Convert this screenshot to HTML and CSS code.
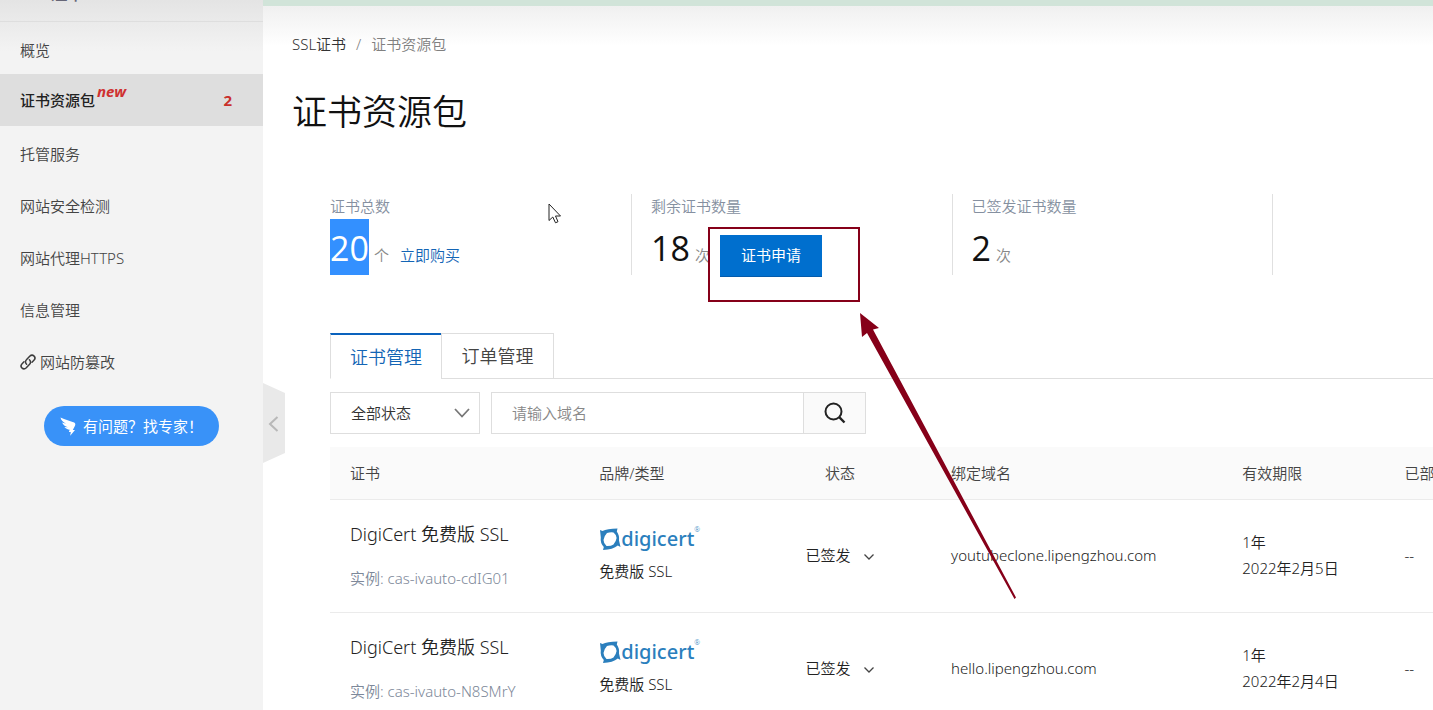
FILE: index.html
```html
<!DOCTYPE html>
<html lang="zh-CN">
<head>
<meta charset="utf-8">
<title>证书资源包</title>
<link rel="stylesheet" href="styles.css">
</head>
<body>
<div class="app">
  <aside class="sidebar">
    <div class="sidebar-head"><span class="sidebar-title">SSL证书</span></div>
    <nav class="nav">
      <a class="nav-item" href="#">概览</a>
      <a class="nav-item active" href="#"><span>证书资源包</span><em class="tag-new">new</em><b class="count">2</b></a>
      <a class="nav-item" href="#">托管服务</a>
      <a class="nav-item" href="#">网站安全检测</a>
      <a class="nav-item" href="#">网站代理HTTPS</a>
      <a class="nav-item" href="#">信息管理</a>
      <a class="nav-item" href="#"><svg class="link-icon" viewBox="0 0 16 16"><g fill="none" stroke="#3c3c3c" stroke-width="1.5" stroke-linecap="round"><path d="M6.600 10.200C5.200 8.900 5.200 7 6.400 5.800L9.700 2.300C10.900 1.100 12.800.900 14.100 2.100C15.300 3.300 15.100 5.100 13.900 6.300L12 8.200"/><path d="M9.400 5.800C10.800 7.100 10.800 9 9.600 10.200L6.300 13.700C5.100 14.900 3.200 15.100 1.900 13.900C.700 12.700.900 10.900 2.100 9.700L4 7.800"/></g></svg>网站防篡改</a>
    </nav>
    <button class="help" type="button"><svg class="wing" viewBox="0 0 16 19"><path fill="#fff" d="M.5.500C5 2.800 10.500 4 14.200 5.500C15.600 6.200 15.500 7.500 15 8.800L12.800 13H15L10.200 18.800L10.800 15H8.900L9.700 12.700C7.500 12.600 5.600 11.700 4.400 10.100L8 10.200C5.200 9.400 2.900 8 2.100 5.600L6.200 6.800C3.100 5.300 1 3.200.5.500Z"/></svg>有问题？找专家！</button>
    <button class="collapse" type="button" aria-label="收起"><svg viewBox="0 0 22 80"><path fill="#e9e9e9" d="M0 0L22 10V70L0 80Z"/><path fill="none" stroke="#b8b8b8" stroke-width="2" d="M14.500 34L7 41L14.500 48"/></svg></button>
  </aside>
  <main class="main">
    <div class="crumbs"><a href="#">SSL证书</a><span class="sep">/</span><span>证书资源包</span></div>
    <h1 class="title">证书资源包</h1>
    <section class="stats">
      <div class="stat"><div class="label">证书总数</div><div class="value"><span class="num selected">20</span><span class="unit">个</span><a class="buy" href="#">立即购买</a></div></div>
      <div class="stat"><div class="label">剩余证书数量</div><div class="value"><span class="num">18</span><span class="unit">次</span><button class="apply" type="button">证书申请</button></div></div>
      <div class="stat"><div class="label">已签发证书数量</div><div class="value"><span class="num">2</span><span class="unit">次</span></div></div>
    </section>
    <section class="panel">
      <div class="tabs"><button class="tab current" type="button">证书管理</button><button class="tab" type="button">订单管理</button></div>
      <form class="filters">
        <div class="select-wrap"><select aria-label="状态"><option>全部状态</option></select><svg viewBox="0 0 16 10"><path fill="none" stroke="#777" stroke-width="1.800" d="M1 1L8 8.500L15 1"/></svg></div>
        <div class="search"><input type="text" aria-label="域名" placeholder="请输入域名"><button type="button" aria-label="搜索"><svg viewBox="0 0 22 22"><g fill="none" stroke="#222" stroke-width="2"><circle cx="9.500" cy="9.500" r="8"/><path stroke-width="2.400" d="M15.200 15.200L20.500 20.500"/></g></svg></button></div>
      </form>
      <table class="certs">
        <colgroup><col class="c-cert"><col class="c-brand"><col class="c-status"><col class="c-domain"><col class="c-valid"><col></colgroup>
        <thead><tr><th>证书</th><th>品牌/类型</th><th class="center">状态</th><th>绑定域名</th><th>有效期限</th><th>已部</th></tr></thead>
        <tbody>
          <tr>
            <td class="cert"><div class="name">DigiCert 免费版 SSL</div><div class="instance">实例: cas-ivauto-cdIG01</div></td>
            <td class="brand"><div class="logo"><svg viewBox="0 0 22 24"><path fill="#2b7fbd" fill-rule="evenodd" d="M1 3L3.500 4Q8 1.500 18.500 1.500L17.800 4.500Q20.500 8 20 13.500L21.500 20L18.800 18.500Q14 22.500 4 23L4.800 20Q1 16 1.800 10.500ZM8 6Q5 9 4.500 13Q4.600 16.500 7.500 19Q12 19.200 14.500 17.400Q17.300 14 17.600 11Q17.400 7.500 14.500 5.400Q11 5 8 6Z"/></svg><span>digicert</span><sup>®</sup></div><div>免费版 SSL</div></td>
            <td class="center">已签发<svg class="chev" viewBox="0 0 12 8"><path fill="none" stroke="#444" stroke-width="1.300" d="M1.500 1.500L6 6L10.500 1.500"/></svg></td>
            <td>youtubeclone.lipengzhou.com</td>
            <td>1年<br>2022年2月5日</td>
            <td>--</td>
          </tr>
          <tr>
            <td class="cert"><div class="name">DigiCert 免费版 SSL</div><div class="instance">实例: cas-ivauto-N8SMrY</div></td>
            <td class="brand"><div class="logo"><svg viewBox="0 0 22 24"><path fill="#2b7fbd" fill-rule="evenodd" d="M1 3L3.500 4Q8 1.500 18.500 1.500L17.800 4.500Q20.500 8 20 13.500L21.500 20L18.800 18.500Q14 22.500 4 23L4.800 20Q1 16 1.800 10.500ZM8 6Q5 9 4.500 13Q4.600 16.500 7.500 19Q12 19.200 14.500 17.400Q17.300 14 17.600 11Q17.400 7.500 14.500 5.400Q11 5 8 6Z"/></svg><span>digicert</span><sup>®</sup></div><div>免费版 SSL</div></td>
            <td class="center">已签发<svg class="chev" viewBox="0 0 12 8"><path fill="none" stroke="#444" stroke-width="1.300" d="M1.500 1.500L6 6L10.500 1.500"/></svg></td>
            <td>hello.lipengzhou.com</td>
            <td>1年<br>2022年2月4日</td>
            <td>--</td>
          </tr>
        </tbody>
      </table>
    </section>
  </main>
  <div class="callout"></div>
  <svg class="arrow" viewBox="0 0 156 286"><path fill="#860019" d="M0 0L19 15L13 16.500L156 284.500L154.500 286L7 20L2 24Z"/></svg>
  <svg class="cursor" viewBox="0 0 14 21"><path fill="#fff" stroke="#222" d="M1 1V17.500L4.800 14L7.500 19.800L10 18.700L7.500 13H12.500Z"/></svg>
</div>
</body>
</html>
```
FILE: styles.css
```css
* { box-sizing: border-box; }
body {
  margin: 0;
  font: 15px/26px "Noto Sans", "Noto Sans CJK SC", sans-serif;
  font-weight: 350;
  color: #333;
  background: #fff;
}
a { color: inherit; text-decoration: none; }
button, input, select { font: inherit; color: inherit; margin: 0; }
svg { display: block; flex: none; }

.app {
  position: relative;
  display: flex;
  height: 100vh;
  overflow: hidden;
}

.sidebar {
  position: relative;
  flex: none;
  width: 263px;
  background: linear-gradient(#e4e4e4, #f3f3f3 52px);
}
.sidebar-head {
  display: flex;
  align-items: flex-end;
  height: 22px;
  padding: 0 20px 15px;
  border-bottom: 1px solid #dedede;
  overflow: hidden;
}
.sidebar-title { font-size: 18px; font-weight: 500; color: #667; }
.nav-item {
  display: flex;
  align-items: center;
  height: 52px;
  padding: 0 31px 0 20px;
  color: #444;
}
.nav { padding-top: 2px; }
.nav .active { margin: -2px 0 2px; background: #dedede; color: #222; font-weight: 500; }
.tag-new { align-self: flex-start; padding: 4px 0 0 2px; color: #cf3030; font-weight: 700; }
.count { margin-left: auto; color: #c9302c; }
.link-icon { width: 16px; height: 16px; margin-right: 4px; }
.help {
  display: flex;
  align-items: center;
  justify-content: center;
  width: 175px;
  height: 40px;
  margin: 18px 44px 0;
  padding: 0;
  border: 0;
  border-radius: 20px;
  background: #3992f8;
  color: #fff;
  font-weight: 400;
}
.wing { width: 16px; height: 19px; margin-right: 7px; }
.collapse {
  position: absolute;
  top: 383px;
  left: 100%;
  width: 22px;
  height: 80px;
  padding: 0;
  border: 0;
  background: none;
}

.main {
  flex: 1;
  min-width: 0;
  padding: 25px 0 0 29px;
  border-top: 6px solid #d1e4d9;
  background: linear-gradient(#f0f0f0, #fff 40px);
}
.crumbs { color: #808080; }
.crumbs a { color: #333; }
.sep { margin: 0 10px; }
.title {
  margin: 27px 0 54px;
  font-size: 35px;
  line-height: 56px;
  font-weight: 350;
  color: #111;
}
.stats { display: flex; padding: 0 160px 0 38px; }
.stat {
  flex: 1;
  height: 81px;
  padding-left: 19px;
  border-right: 1px solid #e0e0e0;
}
.stat:first-child { padding-left: 0; flex: 0 0 302px; }
.label { height: 25px; line-height: 25px; color: #8590a0; }
.value { display: flex; align-items: baseline; height: 55px; }
.num {
  padding-top: 3px;
  font-family: "Open Sans", sans-serif;
  font-size: 34px;
  font-weight: 400;
  line-height: 53px;
  color: #111;
}
.selected { background: #3390ff; color: #fff; }
.unit { margin-left: 5px; color: #888; }
.buy { margin-left: 11px; color: #1365b5; }
.apply {
  width: 102px;
  height: 42px;
  margin-left: 10px;
  padding: 0;
  border: 0;
  border-bottom: 1px solid #045bab;
  background: #006fce;
  color: #fff;
  font-weight: 400;
  line-height: 40px;
}

.panel { margin: 58px 0 0 38px; }
.tabs { display: flex; height: 46px; border-bottom: 1px solid #dedede; }
.tab {
  width: 113px;
  height: 46px;
  margin-left: -1px;
  padding: 0;
  border: 1px solid #dedede;
  background: #fff;
  font-size: 18px;
  color: #444;
}
.current { width: 112px; margin-left: 0; border-top: 2px solid #0a62bd; border-bottom-color: #fff; color: #1365b5; }
.filters { display: flex; gap: 11px; padding: 13px 0 13px; }
.select-wrap { position: relative; width: 150px; }
.select-wrap select {
  width: 100%;
  height: 42px;
  padding: 0 20px;
  border: 1px solid #dedede;
  border-radius: 0;
  background: #fff;
  appearance: none;
}
.select-wrap svg { position: absolute; right: 10px; top: 16px; width: 16px; height: 10px; pointer-events: none; }
.search { display: flex; width: 375px; height: 42px; border: 1px solid #dedede; }
.search input { flex: 1; min-width: 0; padding: 0 20px; border: 0; background: #fff; }
.search input::placeholder { color: #888; }
.search button {
  display: flex;
  align-items: center;
  justify-content: center;
  width: 62px;
  padding: 0;
  border: 0;
  border-left: 1px solid #dedede;
  background: #fafafa;
}
.search svg { width: 22px; height: 22px; }

.certs { width: 100%; table-layout: fixed; border-collapse: collapse; }
.c-cert { width: 22.6%; }
.c-brand { width: 15.4%; }
.c-status { width: 16.5%; }
.c-domain { width: 26.4%; }
.c-valid { width: 14.7%; }
.certs th, .certs td { padding: 0 0 0 20px; text-align: left; font-weight: 350; white-space: nowrap; border-bottom: 1px solid #ebebeb; }
.certs th { height: 52px; background: #fafafa; color: #444; }
.certs td { height: 113px; padding-bottom: 2px; color: #222; }
.certs .cert { padding-bottom: 0; }
.certs .brand { padding-bottom: 8px; }
.certs .center { padding-left: 0; text-align: center; }
.name { margin-bottom: 18px; font-size: 18px; }
.instance { color: #7d8899; }
.logo { display: flex; align-items: center; height: 38px; color: #2b7fbd; font-size: 20px; font-weight: 500; }
.logo svg { width: 22px; height: 24px; }
.logo sup { align-self: flex-start; font-size: 7px; line-height: 20px; font-weight: 350; }
.chev { display: inline-block; width: 12px; height: 8px; margin-left: 12px; }

.callout {
  position: absolute;
  left: 708px;
  top: 227px;
  width: 152px;
  height: 75px;
  border: 2px solid #860019;
}
.arrow { position: absolute; left: 860px; top: 313px; width: 156px; height: 286px; }
.cursor { position: absolute; left: 548px; top: 203px; width: 14px; height: 21px; }
```
